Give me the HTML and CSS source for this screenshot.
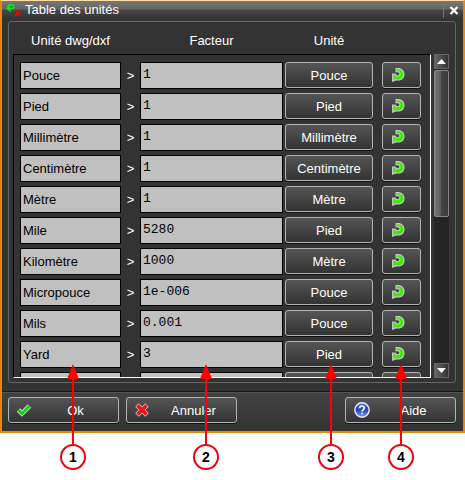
FILE: index.html
```html
<!DOCTYPE html>
<html lang="fr">
<head>
  <meta charset="UTF-8">
  <title>Table des unités</title>
  <meta name="viewport" content="width=device-width, initial-scale=1.0">
  <link rel="stylesheet" href="styles.css">
</head>
<body>
  <svg class="sprite" aria-hidden="true">
    <symbol id="icon-reset" viewBox="0 0 14 14">
      <path d="M4.500 0H8.500C11.800 .8 13.800 3.500 13.500 7C13.200 10.500 10.500 12.800 7 12.500H5L1 14V5.500H4.500L5.500 7C7.300 7.500 8.300 6.800 8.300 5.600C8.300 4.600 7.300 4.300 4.500 4.300Z" fill="#c8c6c8"/>
      <path d="M5.500 1.200H8.200C11 2 12.600 4 12.400 7C12.100 9.900 9.900 11.700 6.500 11.500L4.500 11L2.200 12.300V6.700H3.700L4.900 8.200C7.700 8.800 9.500 7.800 9.400 5.600C9.300 3.900 8.200 3.100 5.500 3.100Z" fill="#40ea08"/>
    </symbol>
  </svg>

  <main class="page">
    <section class="window">
      <header class="titlebar">
        <svg class="title-icon" width="16" height="14" viewBox="0 0 16 14" fill="none">
          <path d="M1.500 4C3 .5 7.500 .5 8.500 5M.5 5.500H8M4 2.500L1 5.500L5 8.500" stroke="#00f020" stroke-width="1.300"/>
          <path d="M9 7.500L14.500 13M14.500 7.500L9 13" stroke="#f00" stroke-width="1.200"/>
        </svg>
        <h1>Table des unités</h1>
        <button class="close" type="button" aria-label="Fermer">
          <svg width="10" height="9" viewBox="0 0 10 9"><path d="M1.500 1L8.500 8M8.500 1L1.500 8" stroke="#fff" stroke-width="2.200"/></svg>
        </button>
      </header>

      <div class="panel">
        <div class="heads">
          <span class="head-name">Unité dwg/dxf</span>
          <span class="head-factor">Facteur</span>
          <span class="head-unit">Unité</span>
        </div>
        <div class="list-area">
          <div class="list" id="list"></div>
          <div class="scrollbar">
            <button type="button" aria-label="Monter"><svg width="9" height="5" viewBox="0 0 9 5"><path d="M0 5L4.500 0L9 5Z" fill="#fff"/></svg></button>
            <div class="track"><div class="thumb"></div></div>
            <button type="button" aria-label="Descendre"><svg width="9" height="5" viewBox="0 0 9 5"><path d="M0 0L4.500 5L9 0Z" fill="#fff"/></svg></button>
          </div>
        </div>
      </div>

      <footer class="actions">
        <button class="btn action" type="button">
          <svg width="14" height="14" viewBox="0 0 14 14"><path d="M1.500 7L5 10.500L12.500 3" fill="none" stroke="#d8d8d8" stroke-width="4.600"/><path d="M1.500 7L5 10.500L12.500 3" fill="none" stroke="#0bd50b" stroke-width="2.800"/></svg>
          <span>Ok</span>
        </button>
        <button class="btn action" type="button">
          <svg width="14" height="14" viewBox="0 0 14 14"><path d="M2 2L12 12M12 2L2 12" stroke="#d0c4c4" stroke-width="5"/><path d="M2.500 2.500L11.500 11.500M11.500 2.500L2.500 11.500" stroke="#ee1111" stroke-width="3.400"/></svg>
          <span>Annuler</span>
        </button>
        <button class="btn action help" type="button">
          <svg width="16" height="16" viewBox="0 0 16 16">
            <defs><linearGradient id="ball" x2="0" y2="1"><stop stop-color="#4a72e0"/><stop offset=".5" stop-color="#2344b8"/><stop offset="1" stop-color="#7ba4f4"/></linearGradient></defs>
            <circle cx="8" cy="8" r="7.200" fill="url(#ball)" stroke="#e8ecf8" stroke-width="1.400"/>
            <path d="M5.700 6.200C5.700 3.300 10.400 3.400 10.300 6.100C10.300 7.700 8 7.800 8 9.500M8 10.700V12.300" fill="none" stroke="#fff" stroke-width="1.600"/>
          </svg>
          <span>Aide</span>
        </button>
      </footer>
    </section>

    <div class="callout c1"><i></i><b>1</b></div>
    <div class="callout c2"><i></i><b>2</b></div>
    <div class="callout c3"><i></i><b>3</b></div>
    <div class="callout c4"><i></i><b>4</b></div>
  </main>

  <script src="units.js"></script>
</body>
</html>
```

FILE: styles.css
```css
* {
  box-sizing: border-box;
}

body {
  margin: 0;
  background: #fff;
  font-family: "Liberation Sans", Arial, sans-serif;
  font-size: 13px;
  color: #fff;
}

button, input {
  font: inherit;
  margin: 0;
}

.sprite {
  position: absolute;
  width: 0;
  height: 0;
}

.page {
  position: relative;
  padding-bottom: 44px;
}

.window {
  background: #333;
  border: 2px solid #e48810;
  border-top: 1px solid #ffdca0;
}

.titlebar {
  display: flex;
  align-items: center;
  height: 18px;
  padding-left: 4px;
  background: linear-gradient(#777, #656565 45%, #474747 50%, #333);
}

.titlebar h1 {
  flex: 1;
  margin: 0 0 0 3px;
  font-size: 13px;
  font-weight: normal;
  line-height: 16px;
}

.close {
  display: flex;
  align-items: center;
  justify-content: center;
  width: 20px;
  height: 15px;
  padding: 0;
  border: 0;
  border-left: 1px solid #777;
  background: none;
}

.panel {
  margin: 2px 7px 0 6px;
  padding: 0 6px 4px 4px;
  border: 1px solid #666;
  border-radius: 3px;
}

.heads {
  display: flex;
  padding: 10px 76px 0 7px;
  height: 32px;
  line-height: 17px;
  text-align: center;
}

.head-name {
  width: 101px;
  margin-right: 19px;
}

.head-factor {
  flex: 1;
  margin-right: 2px;
}

.head-unit {
  width: 88px;
}

.list-area {
  display: flex;
  gap: 3px;
  height: 324px;
}

.list {
  flex: 1;
  min-width: 0;
  overflow: hidden;
  padding: 7px 9px 0 6px;
  border: 1px solid #000;
  border-right-color: #fff;
  border-bottom-color: #fff;
}

.row {
  display: flex;
  height: 27px;
  margin-bottom: 4px;
}

.field {
  height: 27px;
  padding: 0 2px;
  border: 1px solid #000;
  border-radius: 0;
  background: #c0c0c0;
  color: #000;
}

.name {
  width: 101px;
}

.factor {
  flex: 1;
  min-width: 0;
  margin-right: 2px;
  padding-bottom: 2px;
  font-family: "Liberation Mono", "Courier New", monospace;
}

.sep {
  width: 19px;
  line-height: 27px;
  text-align: center;
}

.btn {
  height: 26px;
  padding: 0;
  border: 1px solid #b4b4b4;
  border-radius: 3px;
  background: linear-gradient(#555, #333);
  box-shadow: 0 1px 0 #111;
  color: #fff;
}

.unit {
  width: 88px;
  margin-right: 9px;
}

.reset {
  display: flex;
  align-items: center;
  width: 39px;
  padding-left: 8px;
}

.scrollbar {
  display: flex;
  flex-direction: column;
  width: 15px;
}

.scrollbar button {
  display: flex;
  align-items: center;
  justify-content: center;
  height: 15px;
  padding: 0;
  border: 1px solid #666;
  background: linear-gradient(90deg, #666, #333);
}

.track {
  flex: 1;
  padding-top: 1px;
  background: #252525;
}

.thumb {
  height: 50%;
  border: 1px solid #888;
  border-radius: 2px;
  background: linear-gradient(90deg, #777, #5c5c5c 45%, #444 50%, #3a3a3a);
}

.actions {
  display: flex;
  gap: 7px;
  margin: 8px 0 0;
  padding: 5px 7px 8px 6px;
  border-top: 1px solid #181818;
  box-shadow: inset 0 1px 0 #555;
  background: linear-gradient(#424242, #333);
}

.action {
  display: flex;
  align-items: center;
  width: 111px;
  padding: 0 8px;
}

.action span {
  flex: 1;
  padding-left: 10px;
  text-align: center;
}

.help {
  margin-left: auto;
}

/* numbered callouts laid over the dialog */
.callout {
  position: absolute;
  top: 364px;
  width: 26px;
  color: #000;
}

.callout i {
  display: block;
  width: 12px;
  height: 80px;
  margin: 0 auto;
  background: #f00;
  clip-path: polygon(50% 0, 100% 15px, 7px 15px, 7px 100%, 5px 100%, 5px 15px, 0 15px);
}

.callout b {
  display: block;
  height: 26px;
  border: 2px solid #f00010;
  border-radius: 50%;
  background: #fff;
  font-size: 14px;
  line-height: 23px;
  text-align: center;
}

.c1 {
  left: 60px;
}

.c2 {
  left: 193px;
}

.c3 {
  right: 121px;
}

.c4 {
  right: 51px;
}
```

FILE: units.js
```js
const units = [
  ['Pouce', '1', 'Pouce'],
  ['Pied', '1', 'Pied'],
  ['Millimètre', '1', 'Millimètre'],
  ['Centimètre', '1', 'Centimètre'],
  ['Mètre', '1', 'Mètre'],
  ['Mile', '5280', 'Pied'],
  ['Kilomètre', '1000', 'Mètre'],
  ['Micropouce', '1e-006', 'Pouce'],
  ['Mils', '0.001', 'Pouce'],
  ['Yard', '3', 'Pied'],
  ['', '', '']
];

document.getElementById('list').innerHTML = units.map(([name, factor, unit]) => `
  <div class="row">
    <input class="field name" value="${name}" aria-label="Unité dwg/dxf" readonly>
    <span class="sep">${name ? '&gt;' : ''}</span>
    <input class="field factor" value="${factor}" aria-label="Facteur">
    <button class="btn unit" type="button">${unit}</button>
    <button class="btn reset" type="button" aria-label="Réinitialiser">
      <svg width="14" height="14"><use href="#icon-reset"/></svg>
    </button>
  </div>`).join('');
```
